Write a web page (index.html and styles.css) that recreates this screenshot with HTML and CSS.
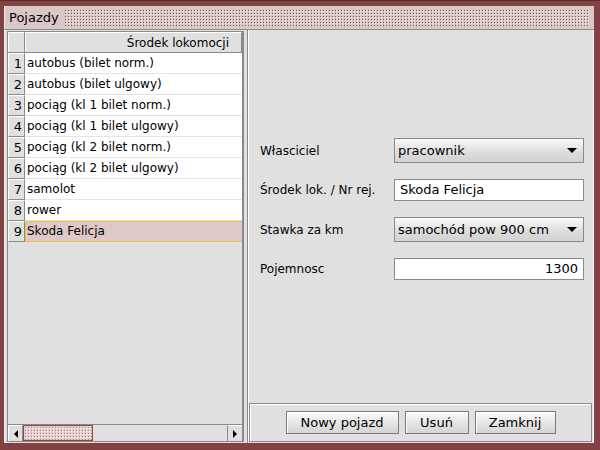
FILE: index.html
```html
<!DOCTYPE html>
<html lang="pl">
<head>
  <meta charset="UTF-8">
  <title>Pojazdy</title>
  <link rel="stylesheet" href="styles.css">
</head>
<body>

<div class="frame">
  <div class="titlebar">
    <span class="title">Pojazdy</span>
    <div class="bumps"></div>
  </div>

  <div class="content">
    <div class="left">
      <div class="table">
        <div class="thead">
          <div class="corner"></div>
          <div class="colhead">Środek lokomocji</div>
        </div>
        <div class="row"><div class="num">1</div><div class="cell">autobus (bilet norm.)</div></div>
        <div class="row"><div class="num">2</div><div class="cell">autobus (bilet ulgowy)</div></div>
        <div class="row"><div class="num">3</div><div class="cell">pociąg (kl 1 bilet norm.)</div></div>
        <div class="row"><div class="num">4</div><div class="cell">pociąg (kl 1 bilet ulgowy)</div></div>
        <div class="row"><div class="num">5</div><div class="cell">pociąg (kl 2 bilet norm.)</div></div>
        <div class="row"><div class="num">6</div><div class="cell">pociąg (kl 2 bilet ulgowy)</div></div>
        <div class="row"><div class="num">7</div><div class="cell">samolot</div></div>
        <div class="row"><div class="num">8</div><div class="cell">rower</div></div>
        <div class="row selected"><div class="num">9</div><div class="cell">Skoda Felicja</div></div>
        <div class="filler"></div>
        <div class="hscroll">
          <div class="arrow"><span class="tri-left"></span></div>
          <div class="thumb"></div>
          <div class="track"></div>
          <div class="arrow"><span class="tri-right"></span></div>
        </div>
      </div>
    </div>

    <div class="right">
      <div class="form">
        <label>Własciciel</label>
        <div class="combo"><span>pracownik</span><span class="tri-down"></span></div>

        <label>Środek lok. / Nr rej.</label>
        <div class="field">Skoda Felicja</div>

        <label>Stawka za km</label>
        <div class="combo"><span>samochód pow 900 cm</span><span class="tri-down"></span></div>

        <label>Pojemnosc</label>
        <div class="field number">1300</div>
      </div>

      <div class="buttons">
        <button class="btn btn-new">Nowy pojazd</button>
        <button class="btn btn-del">Usuń</button>
        <button class="btn btn-close">Zamknij</button>
      </div>
    </div>
  </div>
</div>

</body>
</html>
```

FILE: styles.css
```css
html, body {
  margin: 0;
  padding: 0;
}

body {
  font-family: "DejaVu Sans", sans-serif;
  font-size: 12px;
  color: #000;
}

.frame {
  width: 600px;
  height: 450px;
  box-sizing: border-box;
  background: #804242;
  padding: 5px 6px 7px 4px;
  display: flex;
  flex-direction: column;
  border-top: 1px solid #5a2c2c;
}

.titlebar {
  height: 23px;
  background: #dcc7c7;
  display: flex;
  align-items: center;
  border-left: 1px solid #f2e6e6;
  border-bottom: 1px solid #8a8a8a;
}

.title {
  padding: 0 5px 0 4px;
  font-size: 13px;
}

.bumps {
  flex: 1;
  height: 17px;
  margin-right: 4px;
  background:
    radial-gradient(circle, #7e4e4e 0.7px, transparent 1px) 0 0 / 3px 3px,
    radial-gradient(circle, #fbf4f4 0.6px, transparent 0.9px) 1px 1px / 3px 3px,
    #dcc7c7;
}

.content {
  flex: 1;
  display: flex;
  background: #e0e0e0;
  border-left: 1px solid #f2e6e6;
  border-right: 1px solid #ffffff;
  min-height: 0;
}

.left {
  width: 237px;
  padding: 1px 0 1px 2px;
  display: flex;
}

.table {
  flex: 1;
  display: flex;
  flex-direction: column;
  border: 1px solid #8a8a8a;
  border-right-width: 2px;
}

.thead {
  display: flex;
  height: 20px;
  border-bottom: 1px solid #8a8a8a;
}

.corner {
  width: 17px;
  border-right: 1px solid #8a8a8a;
  border-top: 1px solid #fff;
  border-left: 1px solid #fff;
  box-sizing: border-box;
  background: #e0e0e0;
}

.colhead {
  flex: 1;
  text-align: right;
  padding-right: 12px;
  line-height: 20px;
  border-top: 1px solid #fff;
  border-left: 1px solid #fff;
  border-right: 1px solid #8a8a8a;
  box-sizing: border-box;
}

.row {
  display: flex;
  height: 21px;
}

.num {
  width: 17px;
  box-sizing: border-box;
  text-align: right;
  padding-right: 2px;
  line-height: 20px;
  font-size: 13px;
  background: #e0e0e0;
  border-right: 1px solid #8a8a8a;
  border-bottom: 1px solid #8a8a8a;
  border-top: 1px solid #fff;
  border-left: 1px solid #fff;
}

.cell {
  flex: 1;
  background: #fff;
  line-height: 20px;
  padding-left: 2px;
  border-bottom: 1px solid #e4e4e4;
  white-space: nowrap;
  overflow: hidden;
}

.row.selected .cell {
  background: #dec8c8;
  border: 1px solid #f2c430;
  border-right: none;
  padding-left: 1px;
  line-height: 19px;
}

.filler {
  flex: 1;
}

.hscroll {
  height: 16px;
  display: flex;
  border-top: 1px solid #8a8a8a;
}

.arrow {
  width: 15px;
  display: flex;
  align-items: center;
  justify-content: center;
  border-right: 1px solid #8a8a8a;
  border-left: 1px solid #fff;
  border-top: 1px solid #fff;
  box-sizing: border-box;
}

.arrow:last-child {
  border-left: 1px solid #8a8a8a;
  border-right: none;
}

.tri-left {
  width: 0;
  height: 0;
  border-top: 4px solid transparent;
  border-bottom: 4px solid transparent;
  border-right: 4px solid #000;
}

.tri-right {
  width: 0;
  height: 0;
  border-top: 4px solid transparent;
  border-bottom: 4px solid transparent;
  border-left: 4px solid #000;
}

.thumb {
  width: 68px;
  border: 1px solid #8a4a4a;
  background:
    radial-gradient(circle, #b07c7c 0.6px, transparent 0.9px) 0 0 / 3px 3px,
    radial-gradient(circle, #fff 0.6px, transparent 0.9px) 1px 1px / 3px 3px,
    #e2cfcf;
}

.track {
  flex: 1;
}

.right {
  flex: 1;
  display: flex;
  flex-direction: column;
  margin-left: 3px;
  border-left: 1px solid #8a8a8a;
  box-shadow: inset 1px 0 #fff;
  padding: 0 0 1px 1px;
}

.form {
  flex: 1;
  display: grid;
  grid-template-columns: 134px 190px;
  grid-auto-rows: min-content;
  row-gap: 16px;
  align-items: center;
  align-content: start;
  padding: 108px 0 0 11px;
}

.form label {
  font-size: 12px;
}

.combo {
  height: 25px;
  box-sizing: border-box;
  border: 1px solid #8a8a8a;
  background: linear-gradient(#fafafa, #dcdcdc 60%, #d2d2d2);
  display: flex;
  align-items: center;
  justify-content: space-between;
  padding: 0 6px 0 3px;
  font-size: 13px;
}

.tri-down {
  width: 0;
  height: 0;
  border-left: 5px solid transparent;
  border-right: 5px solid transparent;
  border-top: 5px solid #000;
}

.field {
  height: 22px;
  box-sizing: border-box;
  border: 1px solid #8a8a8a;
  background: #fff;
  line-height: 20px;
  padding: 0 5px;
  font-size: 13px;
}

.field.number {
  text-align: right;
}

.buttons {
  height: 37px;
  border: 1px solid #8a8a8a;
  box-shadow: inset 1px 1px #fff;
  margin-right: 1px;
  display: flex;
  justify-content: center;
  align-items: center;
  gap: 6px;
}

.btn {
  font-family: "DejaVu Sans", sans-serif;
  font-size: 13px;
  height: 23px;
  padding: 0;
  border: 1px solid #7a7a7a;
  background: linear-gradient(#fbfbfb, #e6e6e6 50%, #d4d4d4);
  box-shadow: inset 1px 1px #fff;
  color: #000;
}

.btn-new {
  width: 113px;
}

.btn-del {
  width: 64px;
}

.btn-close {
  width: 81px;
}
```
